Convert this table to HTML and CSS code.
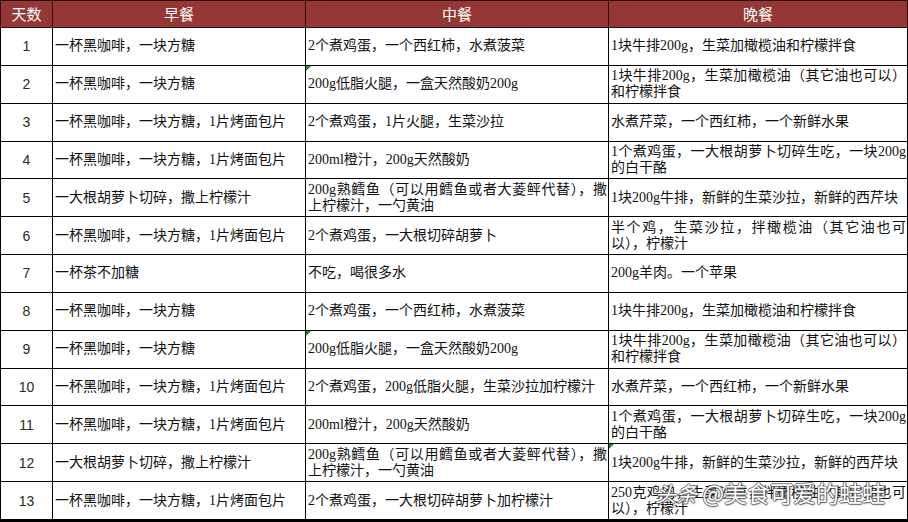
FILE: index.html
```html
<!DOCTYPE html>
<html lang="zh-CN">
<head>
<meta charset="utf-8">
<title>减肥食谱</title>
<link rel="stylesheet" href="styles.css">
</head>
<body>
<div class="page">
<table class="plan">
  <colgroup>
    <col class="c-day"><col class="c-b"><col class="c-l"><col class="c-d">
  </colgroup>
  <thead>
    <tr><th>天数</th><th>早餐</th><th>中餐</th><th>晚餐</th></tr>
  </thead>
  <tbody>
    <tr><td class="day">1</td><td>一杯黑咖啡，一块方糖</td><td>2个煮鸡蛋，一个西红柿，水煮菠菜</td><td>1块牛排200g，生菜加橄榄油和柠檬拌食</td></tr>
    <tr><td class="day">2</td><td>一杯黑咖啡，一块方糖</td><td class="flag">200g低脂火腿，一盒天然酸奶200g</td><td><span class="jl">1块牛排200g，生菜加橄榄油（其它油也可以）</span><span class="ln">和柠檬拌食</span></td></tr>
    <tr><td class="day">3</td><td>一杯黑咖啡，一块方糖，1片烤面包片</td><td>2个煮鸡蛋，1片火腿，生菜沙拉</td><td>水煮芹菜，一个西红柿，一个新鲜水果</td></tr>
    <tr><td class="day">4</td><td>一杯黑咖啡，一块方糖，1片烤面包片</td><td>200ml橙汁，200g天然酸奶</td><td><span class="jl">1个煮鸡蛋，一大根胡萝卜切碎生吃，一块200g</span><span class="ln">的白干酪</span></td></tr>
    <tr><td class="day">5</td><td>一大根胡萝卜切碎，撒上柠檬汁</td><td><span class="jl">200g熟鳕鱼（可以用鳕鱼或者大菱鲆代替），撒</span><span class="ln">上柠檬汁，一勺黄油</span></td><td>1块200g牛排，新鲜的生菜沙拉，新鲜的西芹块</td></tr>
    <tr><td class="day">6</td><td>一杯黑咖啡，一块方糖，1片烤面包片</td><td>2个煮鸡蛋，一大根切碎胡萝卜</td><td><span class="jl">半个鸡，生菜沙拉，拌橄榄油（其它油也可</span><span class="ln">以），柠檬汁</span></td></tr>
    <tr><td class="day">7</td><td>一杯茶不加糖</td><td>不吃，喝很多水</td><td>200g羊肉。一个苹果</td></tr>
    <tr><td class="day">8</td><td>一杯黑咖啡，一块方糖</td><td>2个煮鸡蛋，一个西红柿，水煮菠菜</td><td>1块牛排200g，生菜加橄榄油和柠檬拌食</td></tr>
    <tr><td class="day">9</td><td>一杯黑咖啡，一块方糖</td><td class="flag">200g低脂火腿，一盒天然酸奶200g</td><td><span class="jl">1块牛排200g，生菜加橄榄油（其它油也可以）</span><span class="ln">和柠檬拌食</span></td></tr>
    <tr><td class="day">10</td><td>一杯黑咖啡，一块方糖，1片烤面包片</td><td>2个煮鸡蛋，200g低脂火腿，生菜沙拉加柠檬汁</td><td>水煮芹菜，一个西红柿，一个新鲜水果</td></tr>
    <tr><td class="day">11</td><td>一杯黑咖啡，一块方糖，1片烤面包片</td><td>200ml橙汁，200g天然酸奶</td><td><span class="jl">1个煮鸡蛋，一大根胡萝卜切碎生吃，一块200g</span><span class="ln">的白干酪</span></td></tr>
    <tr><td class="day">12</td><td>一大根胡萝卜切碎，撒上柠檬汁</td><td><span class="jl">200g熟鳕鱼（可以用鳕鱼或者大菱鲆代替），撒</span><span class="ln">上柠檬汁，一勺黄油</span></td><td class="flag">1块200g牛排，新鲜的生菜沙拉，新鲜的西芹块</td></tr>
    <tr><td class="day">13</td><td>一杯黑咖啡，一块方糖，1片烤面包片</td><td>2个煮鸡蛋，一大根切碎胡萝卜加柠檬汁</td><td><span class="jl">250克鸡肉，生菜沙拉，拌橄榄油（其它油也可</span><span class="ln">以），柠檬汁</span></td></tr>
  </tbody>
</table>
<div class="watermark"><span class="wm-logo">头条</span> @美食可爱的蛙蛙</div>
</div>
</body>
</html>
```
FILE: styles.css
```css
html, body {
  margin: 0;
  padding: 0;
  background: #ffffff;
}

.page {
  position: relative;
  width: 908px;
  height: 522px;
  overflow: hidden;
}

.plan {
  border-collapse: collapse;
  table-layout: fixed;
  width: 907px;
  font-family: "Liberation Serif", "Noto Sans CJK SC", serif;
  font-size: 14px;
  line-height: 16px;
  color: #111111;
}

.c-day { width: 52px; }
.c-b { width: 253px; }
.c-l { width: 303px; }
.c-d { width: 299px; }

.plan th {
  height: 26px;
  padding: 0;
  background: #953734;
  color: #ffffff;
  font-family: "Noto Sans CJK SC", sans-serif;
  font-weight: normal;
  font-size: 15px;
  line-height: 18px;
  text-align: center;
  border: 1px solid #2a1010;
}

.plan td {
  height: 36.85px;
  padding: 0 1px 0 2px;
  border: 1px solid #000000;
  vertical-align: middle;
  text-align: left;
  position: relative;
}

.plan tbody tr:last-child td {
  border-bottom: 3px solid #000000;
}

.plan td.day {
  text-align: center;
  font-family: "Liberation Sans", sans-serif;
  font-size: 14px;
  color: #2a2a2a;
  padding: 0;
}

.jl {
  display: block;
  text-align: justify;
  text-align-last: justify;
  white-space: nowrap;
}

.ln {
  display: block;
  white-space: nowrap;
}

.flag::before {
  content: "";
  position: absolute;
  left: 0;
  top: 0;
  width: 0;
  height: 0;
  border-top: 5px solid #2e7d32;
  border-right: 5px solid transparent;
}

.watermark {
  position: absolute;
  left: 655px;
  top: 478px;
  font-family: "Noto Sans CJK SC", sans-serif;
  font-size: 23px;
  line-height: 28px;
  color: #ffffff;
  text-shadow:
    1px 0 0 rgba(80, 80, 80, 0.75),
    -1px 0 0 rgba(80, 80, 80, 0.75),
    0 1px 0 rgba(80, 80, 80, 0.75),
    0 -1px 0 rgba(80, 80, 80, 0.75),
    1px 1px 2px rgba(0, 0, 0, 0.4);
  white-space: nowrap;
}

.wm-logo {
  font-style: italic;
  font-size: 21px;
}
```
